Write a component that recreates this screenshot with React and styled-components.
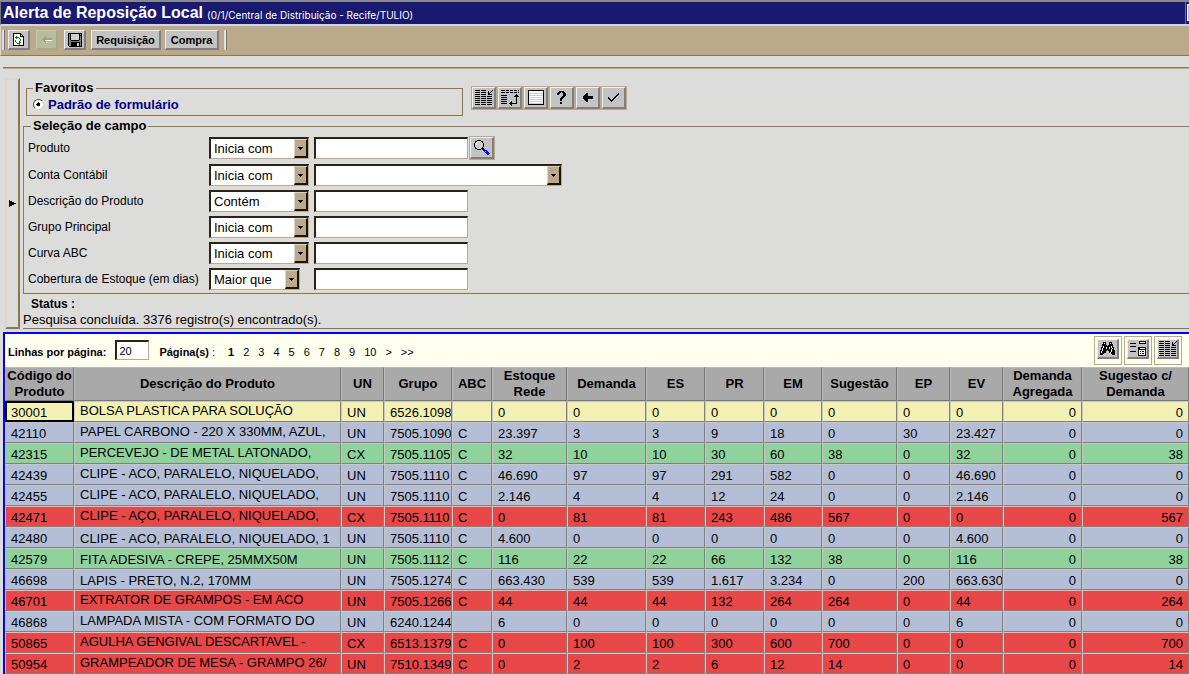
import React from "react";
import styled, { createGlobalStyle } from "styled-components";

const c = {
  page: "#dcdcda",
  tan: "#baa98a",
  brown: "#8b7851",
  cream: "#ddd5c7",
  face: "#c3c3c3",
  shade: "#7f7f7f",
  navy: "#191970",
};

const Global = createGlobalStyle`
  *, *::before, *::after { box-sizing: border-box; }
  body { margin: 0; background: ${c.page}; color: #000; overflow-x: hidden;
    font: 13px/16px "Liberation Sans", Arial, sans-serif; }
  button, input, select { font: inherit; color: inherit; }
  svg { display: block; }
`;

const TitleBar = styled.header`
  display: flex;
  align-items: center;
  gap: 4px;
  height: 26px;
  padding-left: 2px;
  color: #fff;
  background: ${c.navy};
  border: solid;
  border-width: 2px 0 2px 1px;
  border-color: #8a8894 #777 #d6d6d6 #777;
`;
const Title = styled.h1`
  margin: 0;
  font-size: 16px;
  line-height: 20px;
  white-space: nowrap;
`;
const SubTitle = styled.span`
  flex: 1;
  padding-top: 4px;
  font-family: Inter, Verdana, sans-serif;
  font-size: 10px;
  line-height: 16px;
`;
const WindowEdge = styled.span`
  width: 4px;
  height: 22px;
  border: solid #777;
  border-width: 0 0 0 1px;
  padding: 2px 0 2px 1px;
  &::before { content: ""; display: block; height: 17px; background: #bbb; border: 1px solid #fff; border-right: 0; }
`;

const Toolbar = styled.nav`
  display: flex;
  align-items: flex-start;
  height: 30px;
  padding: 4px 0 0 1px;
  background: ${c.tan};
  border-left: 1px solid ${c.cream};
  border-bottom: 1px solid ${c.brown};
`;
const Grip = styled.span`
  width: 3px;
  height: 20px;
  margin-right: ${(p) => p.$after || 0}px;
  background: #e4e1da;
  border: solid;
  border-width: 0 1px 0 0;
  border-color: #777;
`;
const ToolButton = styled.button`
  display: flex;
  align-items: center;
  justify-content: center;
  width: ${(p) => p.$w}px;
  height: 20px;
  margin-right: ${(p) => p.$gap}px;
  padding: 0;
  font-size: 11px;
  font-weight: bold;
  background: ${(p) => (p.disabled ? "#b5bd9b" : c.face)};
  border: solid;
  border-width: 1px 2px 2px 1px;
  border-color: ${(p) => (p.disabled ? "#c8c5ac #aaa78c #aaa78c #c8c5ac" : `#ececec ${c.shade} ${c.shade} #ececec`)};
`;

const Rule = styled.hr`
  height: 2px;
  margin: 11px 0 9px 3px;
  border: 0;
  border-top: 1px solid ${c.brown};
  border-bottom: 1px solid ${c.tan};
`;
const SearchArea = styled.section`
  display: grid;
  grid-template-columns: 15px minmax(0, 1fr);
  column-gap: 3px;
  padding-left: 5px;
`;
const Collapse = styled.button`
  display: flex;
  align-items: center;
  justify-content: center;
  padding: 0;
  background: transparent;
  border: 2px solid;
  border-color: ${c.cream} ${c.brown} ${c.brown} ${c.cream};
`;
const FormColumn = styled.div`
  min-width: 0;
  display: flex;
  flex-direction: column;
`;
const TopLine = styled.div`
  display: flex;
  align-items: flex-start;
  gap: 8px;
  padding: 2px 0 0 3px;
`;
const FieldSet = styled.fieldset`
  min-width: 0;
  margin: 0;
  border: 1px solid ${c.brown};
  box-shadow: inset -1px -1px 0 ${c.cream};
`;
const Favorites = styled(FieldSet)`
  width: 437px;
  height: 36px;
  padding: 0 0 0 6px;
`;
const Fields = styled(FieldSet)`
  height: 176px;
  margin-top: 2px;
  padding: 0 0 0 4px;
  border-right: 0;
`;
const Legend = styled.legend`
  margin-left: ${(p) => p.$shift || 0}px;
  padding: 0 2px;
  font-weight: bold;
  line-height: 16px;
`;
const Choice = styled.label`
  display: flex;
  align-items: center;
  gap: 4px;
  font-weight: bold;
  line-height: 18px;
  color: #00008b;
`;
const Radio = styled.input`
  appearance: none;
  width: 11px;
  height: 11px;
  margin: 0 0 2px;
  border: 1px solid #5a5040;
  border-right-color: ${c.cream};
  border-bottom-color: ${c.cream};
  border-radius: 50%;
  background: radial-gradient(circle, #000 0 2px, #fff 2px);
`;

const IconRow = styled.div`
  display: flex;
  padding-top: ${(p) => p.$top || 0}px;
  gap: ${(p) => p.$gap || 0}px;
`;
const IconButton = styled.button`
  display: flex;
  flex: none;
  width: 26px;
  height: 24px;
  padding: 0;
  background: transparent;
  border: 1px solid ${c.tan};
`;
const LargeIconButton = styled(IconButton)`
  width: 28px;
  height: 29px;
  padding: 2px;
`;
const IconFace = styled.span`
  display: flex;
  align-items: center;
  justify-content: center;
  flex: 1;
  height: ${(p) => p.$h || 22}px;
  background: ${c.face};
  border: solid;
  border-width: 1px 2px 2px 1px;
  border-color: #f0f0f0 ${c.shade} ${c.shade} #f0f0f0;
`;

const FieldGrid = styled.div`
  display: grid;
  grid-template-columns: 181px 105px auto;
  grid-template-rows: 28px repeat(5, 26px);
  align-items: center;
  justify-content: start;
`;
const FieldLabel = styled.label`
  font-size: 12px;
  white-space: nowrap;
`;
const Value = styled.div`
  display: flex;
  align-items: center;
  gap: 1px;
`;
const TextBox = styled.input`
  width: ${(p) => p.$w}px;
  height: ${(p) => p.$h || 22}px;
  padding: 0 2px;
  border: solid;
  border-width: 2px 1px 1px 2px;
  border-color: #2a2318 ${c.tan} ${c.tan} #2a2318;
  border-radius: 0;
  background: #fff;
  outline: 0;
`;
const SelectBox = styled.div`
  position: relative;
  width: ${(p) => p.$w}px;
  height: 22px;
  & > span {
    position: absolute;
    top: 2px;
    right: 1px;
    bottom: 1px;
    width: 14px;
    display: flex;
    align-items: center;
    justify-content: center;
    pointer-events: none;
    background: ${c.tan};
    border: solid;
    border-width: 1px 2px 2px 1px;
    border-color: ${c.cream} #1c1409 #1c1409 ${c.cream};
  }
`;
const NativeSelect = styled.select`
  appearance: none;
  width: 100%;
  height: 22px;
  padding: 0 16px 0 3px;
  border: solid;
  border-width: 2px 1px 1px 2px;
  border-color: #2a2318 ${c.tan} ${c.tan} #2a2318;
  border-radius: 0;
  background: #fff;
  outline: 0;
`;

const Status = styled.div`
  border-bottom: 1px solid ${c.brown};
  & > strong { display: block; padding: 2px 0 0 8px; font-size: 12px; line-height: 16px; }
  & > p { margin: 0; line-height: 16px; }
`;

const Results = styled.main`
  margin: 3px 0 0 3px;
  border: solid #00f;
  border-width: 2px 0 0 2px;
  background: #fffff0;
`;
const Pager = styled.div`
  display: flex;
  align-items: flex-start;
  height: 33px;
  padding: 2px 7px 0 3px;
  font-size: 11px;
`;
const PagerText = styled.div`
  flex: 1;
  display: flex;
  align-items: center;
  padding-top: 4px;
  & > label { font-weight: bold; margin-right: 9px; padding-top: 3px; }
`;
const Pages = styled.div`
  display: flex;
  gap: 9px;
  padding: 3px 0 0 10px;
  & > a { color: #000; text-decoration: none; }
  & > span { margin-right: 4px; }
`;

const Grid = styled.table`
  width: 100%;
  table-layout: fixed;
  border-collapse: separate;
  border-spacing: 0;
`;
const Head = styled.th`
  height: 34px;
  padding: 0;
  line-height: 16px;
  background: #a9a9a9;
  border: solid 1px;
  border-color: #bbb #777 #777 #bbb;
`;
const tones = { y: "#f3f0b4", b: "#b4bfd7", g: "#90d29c", r: "#e84747" };
const Row = styled.tr`
  background: ${(p) => tones[p.$tone]};
`;
const Cell = styled.td`
  height: 21px;
  padding: ${(p) => (p.$raised ? "0 0 2px 5px" : "2px 5px 0")};
  padding-right: ${(p) => (p.$right ? 5 : 0)}px;
  line-height: 16px;
  text-align: ${(p) => (p.$right ? "right" : "left")};
  white-space: nowrap;
  overflow: hidden;
  border: 1px solid;
  border-color: #c8c8c4 #808080 #808080 #c8c8c4;
  ${(p) => p.$current && "outline: 2px solid #000; outline-offset: -2px;"}
`;

/* Draws a small bitmap: one string per pixel row, one letter per colour. */
const inks = { "#": "#000", w: "#fff", g: "#008000", b: "#00f", l: "#d0d0d0", m: "#808080", t: "#a39d84" };
function Pixels({ rows }) {
  const w = Math.max(...rows.map((r) => r.length));
  const paths = {};
  rows.forEach((r, y) => {
    for (const m of r.matchAll(/([^ .])\1*/g)) {
      paths[m[1]] = (paths[m[1]] || "") + `M${m.index} ${y}h${m[0].length}v1h-${m[0].length}z`;
    }
  });
  return (
    <svg width={w} height={rows.length} viewBox={`0 0 ${w} ${rows.length}`} shapeRendering="crispEdges" aria-hidden="true">
      {Object.entries(paths).map(([k, d]) => <path key={k} d={d} fill={inks[k]} />)}
    </svg>
  );
}

const art = {
  refresh: [
    "########...",
    "#wwwwww##..",
    "#wwwwww#w#.",
    "#wwgwww####",
    "#wggggwwww#",
    "#wwgwwgwww#",
    "#wwwwwwgww#",
    "#wgwwwwgww#",
    "#wgwwwgwww#",
    "#wwgwwggww#",
    "#wwwgggwww#",
    "#wwwwwgwww#",
    "###########",
  ],
  backOff: [
    "...t......",
    "..tt......",
    ".ttttttttt",
    "tttttttttt",
    ".ttwwwwwww",
    "..tt......",
    "...tw.....",
  ],
  save: [
    "##############",
    "#m#llllllll#m#",
    "#m#llllllll###",
    "#m#llllllll#m#",
    "#m#llllllll#m#",
    "#m#llllllll#m#",
    "#m#llllllll#m#",
    "#mm########mm#",
    "#mmmmmmmmmmmm#",
    "#mm#########m#",
    "#mm######ll#m#",
    "#mm######ll#m#",
    "#mm######ll#m#",
    ".#############",
  ],
  list: [
    "#####.#####......#",
    ".............#..#.",
    "#####.#####..#.#..",
    ".............##...",
    "#####.#####..####.",
    "..................",
    "#####.#####.#####.",
    "..................",
    "#####.#####.#####.",
    "..................",
    "#####.#####.#####.",
    "..................",
    "#####.#####.#####.",
    "..................",
    "#####.#####.#####.",
  ],
  move: [
    "####.###.###.###.#",
    "..................",
    "####.###.###.###.#",
    "..................",
    "...............#..",
    "######........###.",
    ".............#####",
    "######.........#..",
    "...............#..",
    "######.........#..",
    "...............#..",
    "######....#....#..",
    ".........##....#..",
    "######..########..",
    ".........##.......",
    "..........#.......",
  ],
  sheet: [
    "################",
    "#wwwwwwwwwwwwww#",
    "#wwwwwwwwwwwwww#",
    "#llllllllllllll#",
    "#wwwwwwwwwwwwww#",
    "#llllllllllllll#",
    "#wwwwwwwwwwwwww#",
    "#llllllllllllll#",
    "#wwwwwwwwwwwwww#",
    "#llllllllllllll#",
    "#wwwwwwwwwwwwww#",
    "#llllllllllllll#",
    "#wwwwwwwwwwwwww#",
    "#llllllllllllll#",
    "################",
  ],
  help: [
    "..#####..",
    ".###.###.",
    "###...###",
    "##....###",
    "......###",
    ".....###.",
    "....###..",
    "...###...",
    "...##....",
    "...##....",
    ".........",
    "...##....",
    "...##....",
  ],
  back: [
    "...##.....",
    "..###.....",
    ".####.....",
    "##########",
    "##########",
    "##########",
    ".####.....",
    "..###.....",
    "...##.....",
  ],
  check: [
    "..........#",
    ".........##",
    "........##.",
    ".......##..",
    "#.....##...",
    "##...##....",
    ".##.##.....",
    "..###......",
    "...#.......",
  ],
  lens: [
    "...####.........",
    ".##llll##.......",
    ".#lwllll#.......",
    "#lwllllll#......",
    "#lwllllll#......",
    "#llllllll#......",
    "#llllllll#......",
    ".#llllll#.......",
    ".##llll###......",
    "...####.#bb.....",
    ".........bbbb...",
    "..........blbb..",
    "...........bbbb.",
    "............bbbb",
    ".............bb.",
  ],
  find: [
    "...###...###...",
    "...#w#...#w#...",
    "..####...####..",
    "..#####.#####..",
    "..#w#######w#..",
    ".##w##w##w#w##.",
    ".#w###w##w##w#.",
    ".#w########w##.",
    "##w####.###w###",
    "#w####...##w###",
    "#w####...#w####",
    "####.......####",
    "###.........###",
  ],
  form: [
    ".........#######",
    ".........#wwwww#",
    "######...#######",
    "................",
    "................",
    "######..........",
    "........########",
    "........##wwwww#",
    "........########",
    "........#wwwwww#",
    "######..#w#w##w#",
    "........#wwwwww#",
    "........#w#w##w#",
    "........#wwwwww#",
    "........########",
  ],
  down: ["#####", ".###.", "..#.."],
  right: ["#......", "###....", "#####..", "#######", "#####..", "###....", "#......"],
};

function Select({ id, label, width, options }) {
  return (
    <SelectBox $w={width}>
      <NativeSelect id={id} aria-label={label} defaultValue={options[0]}>
        {options.map((o) => <option key={o}>{o}</option>)}
      </NativeSelect>
      <span><Pixels rows={art.down} /></span>
    </SelectBox>
  );
}

const tools = [
  ["Colunas", "list"], ["Ordenar", "move"], ["Limpar", "sheet"],
  ["Ajuda", "help"], ["Voltar", "back"], ["Confirmar", "check"],
];
const fields = [
  ["produto", "Produto", "Inicia com"],
  ["conta", "Conta Contábil", "Inicia com"],
  ["descricao", "Descrição do Produto", "Contém"],
  ["grupo", "Grupo Principal", "Inicia com"],
  ["curva", "Curva ABC", "Inicia com"],
  ["cobertura", "Cobertura de Estoque (em dias)", "Maior que"],
];
const columns = [
  ["Código do Produto", 69], ["Descrição do Produto"], ["UN", 43], ["Grupo", 68], ["ABC", 40],
  ["Estoque Rede", 75], ["Demanda", 79], ["ES", 59], ["PR", 59], ["EM", 58], ["Sugestão", 75],
  ["EP", 53], ["EV", 53], ["Demanda Agregada", 79], ["Sugestao c/ Demanda", 107],
];
const oneLine = new Set(["42480", "42579", "46698"]);
const data = [
  "y|30001|BOLSA PLASTICA PARA SOLUÇÃO|UN|6526.1098||0|0|0|0|0|0|0|0|0|0",
  "b|42110|PAPEL CARBONO - 220 X 330MM, AZUL,|UN|7505.1090|C|23.397|3|3|9|18|0|30|23.427|0|0",
  "g|42315|PERCEVEJO - DE METAL LATONADO,|CX|7505.1105|C|32|10|10|30|60|38|0|32|0|38",
  "b|42439|CLIPE - ACO, PARALELO, NIQUELADO,|UN|7505.1110|C|46.690|97|97|291|582|0|0|46.690|0|0",
  "b|42455|CLIPE - ACO, PARALELO, NIQUELADO,|UN|7505.1110|C|2.146|4|4|12|24|0|0|2.146|0|0",
  "r|42471|CLIPE - AÇO, PARALELO, NIQUELADO,|CX|7505.1110|C|0|81|81|243|486|567|0|0|0|567",
  "b|42480|CLIPE - ACO, PARALELO, NIQUELADO, 1|UN|7505.1110|C|4.600|0|0|0|0|0|0|4.600|0|0",
  "g|42579|FITA ADESIVA - CREPE, 25MMX50M|UN|7505.1112|C|116|22|22|66|132|38|0|116|0|38",
  "b|46698|LAPIS - PRETO, N.2, 170MM|UN|7505.1274|C|663.430|539|539|1.617|3.234|0|200|663.630|0|0",
  "r|46701|EXTRATOR DE GRAMPOS - EM ACO|UN|7505.1266|C|44|44|44|132|264|264|0|44|0|264",
  "b|46868|LAMPADA MISTA - COM FORMATO DO|UN|6240.1244||6|0|0|0|0|0|0|6|0|0",
  "r|50865|AGULHA GENGIVAL DESCARTAVEL -|CX|6513.1379|C|0|100|100|300|600|700|0|0|0|700",
  "r|50954|GRAMPEADOR DE MESA - GRAMPO 26/|UN|7510.1349|C|0|2|2|6|12|14|0|0|0|14",
].map((line) => line.split("|"));

export default function App() {
  return (
    <>
      <Global />
      <TitleBar>
        <Title>Alerta de Reposição Local</Title>
        <SubTitle>(0/1/Central de Distribuição - Recife/TULIO)</SubTitle>
        <WindowEdge />
      </TitleBar>
      <Toolbar>
        <Grip $after={3} />
        <ToolButton $w={22} $gap={6} aria-label="Atualizar"><Pixels rows={art.refresh} /></ToolButton>
        <ToolButton $w={22} $gap={6} disabled aria-label="Voltar"><Pixels rows={art.backOff} /></ToolButton>
        <ToolButton $w={22} $gap={5} aria-label="Salvar"><Pixels rows={art.save} /></ToolButton>
        <ToolButton $w={70} $gap={4}>Requisição</ToolButton>
        <ToolButton $w={54} $gap={5}>Compra</ToolButton>
        <Grip />
      </Toolbar>
      <Rule />
      <SearchArea>
        <Collapse aria-label="Recolher"><Pixels rows={art.right} /></Collapse>
        <FormColumn>
          <TopLine>
            <Favorites>
              <Legend>Favoritos</Legend>
              <Choice>
                <Radio type="radio" name="favorito" defaultChecked />
                Padrão de formulário
              </Choice>
            </Favorites>
            <IconRow $top={6}>
              {tools.map(([label, icon]) => (
                <IconButton key={icon} aria-label={label}>
                  <IconFace><Pixels rows={art[icon]} /></IconFace>
                </IconButton>
              ))}
            </IconRow>
          </TopLine>
          <Fields>
            <Legend $shift={3}>Seleção de campo</Legend>
            <FieldGrid>
              {fields.map(([id, label, op]) => (
                <React.Fragment key={id}>
                  <FieldLabel htmlFor={id}>{label}</FieldLabel>
                  <Select label={`Operador: ${label}`} width={id === "cobertura" ? 91 : 100} options={[op]} />
                  <Value>
                    {id === "conta"
                      ? <Select id={id} width={248} options={[""]} />
                      : <TextBox id={id} $w={154} />}
                    {id === "produto" && (
                      <IconButton aria-label="Pesquisar"><IconFace><Pixels rows={art.lens} /></IconFace></IconButton>
                    )}
                  </Value>
                </React.Fragment>
              ))}
            </FieldGrid>
          </Fields>
          <Status>
            <strong>Status :</strong>
            <p>Pesquisa concluída. 3376 registro(s) encontrado(s).</p>
          </Status>
        </FormColumn>
      </SearchArea>
      <Results>
        <Pager>
          <PagerText>
            <label htmlFor="linhas">Linhas por página:</label>
            <TextBox id="linhas" $w={34} $h={20} defaultValue="20" />
            <Pages>
              <span><b>Página(s)</b> :</span>
              <b>1</b>
              {["2", "3", "4", "5", "6", "7", "8", "9", "10", ">", ">>"].map((p) => <a key={p} href="#">{p}</a>)}
            </Pages>
          </PagerText>
          <IconRow $gap={2}>
            {[["Localizar", "find"], ["Formulário", "form"], ["Colunas", "list"]].map(([label, icon]) => (
              <LargeIconButton key={icon} aria-label={label}>
                <IconFace $h={20}><Pixels rows={art[icon]} /></IconFace>
              </LargeIconButton>
            ))}
          </IconRow>
        </Pager>
        <Grid>
          <colgroup>
            {columns.map(([name, width]) => <col key={name} width={width} />)}
          </colgroup>
          <thead>
            <tr>{columns.map(([name]) => <Head key={name} scope="col">{name}</Head>)}</tr>
          </thead>
          <tbody>
            {data.map(([tone, ...cells], r) => (
              <Row key={cells[0]} $tone={tone}>
                {cells.map((text, i) => (
                  <Cell
                    key={i}
                    $raised={i === 1 && !oneLine.has(cells[0])}
                    $right={i > 12}
                    $current={r === 0 && i === 0}
                  >
                    {text}
                  </Cell>
                ))}
              </Row>
            ))}
          </tbody>
        </Grid>
      </Results>
    </>
  );
}
